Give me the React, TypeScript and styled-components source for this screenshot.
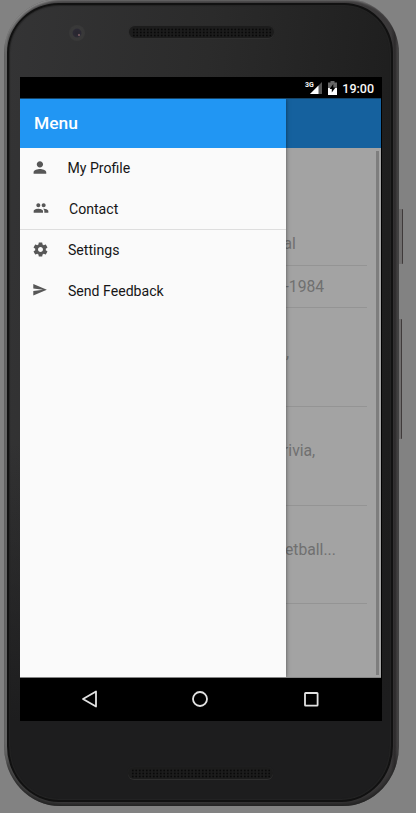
import React from 'react';
import styled, { createGlobalStyle } from 'styled-components';

const GlobalStyle = createGlobalStyle`
  * { box-sizing: border-box; }
  html, body { margin: 0; background: #828282; overflow: hidden; }
  body { font-family: Roboto, 'Noto Sans', sans-serif; }
  svg { display: block; flex: none; }
`;

const Stage = styled.div`
  position: relative;
  width: 416px;
  height: 813px;
  overflow: hidden;
  background: #828282;
`;

const SideButton = styled.div<{ $top: number; $height: number; $width: number }>`
  position: absolute;
  left: 398px;
  top: ${(p) => p.$top}px;
  width: ${(p) => p.$width}px;
  height: ${(p) => p.$height}px;
  background: #706e6e;
  border-right: 1px solid #3f3a3a;
  border-radius: 0 1px 1px 0;
`;

const Rim = styled.div`
  position: relative;
  width: 395px;
  height: 807px;
  margin: -1px 0 0 4px;
  padding: 4px 6px 4px 3px;
  border-radius: 56px 53px 56px 56px / 54px 54px 60px 60px;
  background: linear-gradient(90deg, #5f5f5f 0, #707070 2px, #555 4px, #454445 30px, #3b393a 387px, #2d2b2c 391px, #434142 393px, #505050 395px);
  box-shadow: inset 0 -4px 4px -1px #222, inset 2px 3px 3px -2px #999;
`;

const Body = styled.div`
  display: flex;
  flex-direction: column;
  align-items: center;
  width: 386px;
  height: 799px;
  border: 2px solid #111;
  border-radius: 52px 49px 52px 52px / 50px 50px 56px 56px;
  background: linear-gradient(180deg, rgba(28,28,29,0) 0%, rgba(28,28,29,0) 55%, #1d1d1e 90%),
    linear-gradient(95deg, #343435 0%, #2b2b2b 45%, #1c1c1c 95%);
  box-shadow: inset 0 0 1px 1px #242424;
`;

const TopBezel = styled.div`
  display: flex;
  flex: none;
  width: 100%;
  height: 72px;
  padding: 21px 0 0 60px;
`;

const Camera = styled.div`
  width: 16px;
  height: 16px;
  margin: -1px 44px 0 0;
  border-radius: 50%;
  background: radial-gradient(circle at 10px 10px, #a0777a 0, transparent 1.6px),
    radial-gradient(circle, #28252e 0, #2b2933 3.8px, #393939 5px, #383838 8px);
`;

const Speaker = styled.div`
  width: 145px;
  height: 12px;
  padding: 1.5px 3px;
  border-radius: 6px;
  background: #1c1c1c;
  box-shadow: 0 0 1px #292929, 0 1px 0 #303030;
`;

const Holes = styled.div`
  height: 9px;
  background-image: radial-gradient(circle, #090909 0.6px, transparent 1.3px);
  background-size: 3.5px 3px;
`;

const Screen = styled.div`
  display: flex;
  flex: none;
  flex-direction: column;
  width: 362px;
  height: 644px;
  margin-left: 2px;
  background: #000;
`;

const StatusBar = styled.div`
  display: flex;
  flex: none;
  align-items: flex-start;
  width: 362px;
  height: 21px;
  padding: 4px 7px 0 285px;
  color: #f7f7f7;
`;

const Clock = styled.span`
  margin: -1px 0 0 5.5px;
  font-size: 12.5px;
  line-height: 17px;
  font-weight: 500;
`;

const AppArea = styled.div`
  display: flex;
  flex: none;
  width: 361px;
  height: 580px;
  border-top: 1px solid #164467;
  border-bottom: 1px solid #858585;
  overflow: hidden;
  background: #a3a3a3;
`;

const Drawer = styled.nav`
  position: relative;
  flex: none;
  width: 266px;
  background: #fafafa;
  box-shadow: 0 0 4px rgba(0, 0, 0, 0.5);
`;

const DrawerTitle = styled.h1`
  height: 49px;
  margin: 0;
  padding-left: 14px;
  background: #2196f3;
  color: #fff;
  font-size: 17.4px;
  font-weight: 500;
  line-height: 49px;
`;

const MenuGroup = styled.ul`
  margin: 0;
  padding: 0;
  list-style: none;
  & + & { border-top: 1px solid #dedede; }
`;

const MenuItem = styled.li<{ $gap: number }>`
  display: flex;
  align-items: center;
  gap: ${(p) => p.$gap}px;
  height: 40.5px;
  padding: 0 0 0 12px;
  color: #161616;
  font-size: 14.1px;
  svg { margin-top: -2px; fill: #575757; }
`;

const Content = styled.main`
  flex: 1;
  min-width: 0;
`;

const Toolbar = styled.div`
  height: 49px;
  background: #15619e;
`;

const Scroller = styled.div`
  display: flex;
  justify-content: space-between;
  height: 529px;
  padding: 3px 2px 2px 0;
  overflow: hidden;
`;

const Fields = styled.div`
  width: 81px;
`;

const Field = styled.div<{ $height: number; $line: number; $shift: number }>`
  height: ${(p) => p.$height}px;
  padding-top: ${(p) => p.$line}px;
  border-bottom: 1px solid #949494;
  color: #707070;
  font-size: 15.7px;
  line-height: 20px;
  white-space: nowrap;
  text-indent: ${(p) => p.$shift}px;
`;

const Scrollbar = styled.div`
  width: 3px;
  height: 524px;
  background: #7e7e7e;
`;

const NavBar = styled.div`
  display: flex;
  align-items: center;
  justify-content: space-between;
  height: 43px;
  padding: 0 62.5px 2px 60px;
  svg { fill: none; stroke: #e2e2e2; stroke-width: 1.8; }
`;

const BottomBezel = styled.div`
  padding: 46px 0 0 1px;
`;

const icons = {
  person: 'M12 12c2.21 0 4-1.79 4-4s-1.79-4-4-4-4 1.79-4 4 1.79 4 4 4zm0 2c-2.67 0-8 1.34-8 4v2h16v-2c0-2.66-5.33-4-8-4z',
  people: 'M16 11c1.66 0 2.99-1.34 2.99-3S17.66 5 16 5s-3 1.34-3 3 1.34 3 3 3zm-8 0c1.66 0 2.99-1.34 2.99-3S9.66 5 8 5 5 6.34 5 8s1.34 3 3 3zm0 2c-2.33 0-7 1.17-7 3.5V19h14v-2.5c0-2.33-4.67-3.5-7-3.5zm8 0c-.29 0-.62.02-.97.05 1.16.84 1.97 1.97 1.97 3.45V19h6v-2.5c0-2.33-4.67-3.5-7-3.5z',
  gear: 'M19.43 12.98c.04-.32.07-.64.07-.98s-.03-.66-.07-.98l2.11-1.65c.19-.15.24-.42.12-.64l-2-3.46c-.12-.22-.39-.3-.61-.22l-2.49 1c-.52-.4-1.08-.73-1.69-.98l-.38-2.65C14.46 2.18 14.25 2 14 2h-4c-.25 0-.46.18-.49.42l-.38 2.65c-.61.25-1.17.59-1.69.98l-2.49-1c-.23-.09-.49 0-.61.22l-2 3.46c-.13.22-.07.49.12.64l2.11 1.65c-.04.32-.07.65-.07.98s.03.66.07.98l-2.11 1.65c-.19.15-.24.42-.12.64l2 3.46c.12.22.39.3.61.22l2.49-1c.52.4 1.08.73 1.69.98l.38 2.65c.03.24.24.42.49.42h4c.25 0 .46-.18.49-.42l.38-2.65c.61-.25 1.17-.59 1.69-.98l2.49 1c.23.09.49 0 .61-.22l2-3.46c.12-.22.07-.49-.12-.64l-2.11-1.65zM12 15.5c-1.93 0-3.5-1.57-3.5-3.5s1.57-3.5 3.5-3.5 3.5 1.57 3.5 3.5-1.57 3.5-3.5 3.5z',
  send: 'M2.01 21L23 12 2.01 3 2 10l15 2-15 2z',
};

type MenuEntry = { label: string; path: string; box: string; size: number; gap: number };

const groups: MenuEntry[][] = [
  [
    { label: 'My Profile', path: icons.person, box: '2 0 24 24', size: 19, gap: 16.5 },
    { label: 'Contact', path: icons.people, box: '-1.5 0 24 24', size: 16, gap: 21 },
  ],
  [
    { label: 'Settings', path: icons.gear, box: '0 0 24 24', size: 17, gap: 19 },
    { label: 'Send Feedback', path: icons.send, box: '0 0 24 24', size: 15.5, gap: 20.5 },
  ],
];

const fields = [
  { text: 'al', height: 115, line: 83, shift: -2.5 },
  { text: '-1984', height: 42, line: 10.5, shift: -1.5 },
  { text: ',', height: 99, line: 35, shift: 0 },
  { text: 'rivia,', height: 98.5, line: 34, shift: -3 },
  { text: 'etball...', height: 98.5, line: 34, shift: -1 },
];

const NetworkLabel = styled.span`
  font-size: 7px;
  line-height: 8px;
  font-weight: 700;
`;

const SignalIcon = styled.svg`
  margin: 1px 0 0 -5px;
`;

const BatteryIcon = styled.svg`
  margin: 0 0 0 6px;
`;

export default function App() {
  return (
    <>
      <GlobalStyle />
      <Stage>
        <SideButton $top={209} $height={55} $width={5} />
        <SideButton $top={319} $height={120} $width={4} />
        <Rim>
          <Body>
            <TopBezel>
              <Camera />
              <Speaker><Holes /></Speaker>
            </TopBezel>
            <Screen>
              <StatusBar>
                <NetworkLabel>3G</NetworkLabel>
                <SignalIcon width="13" height="12" viewBox="0 0 13 12">
                  <path d="M13 0V12H1Z" fill="#555" />
                  <path d="M9.5 3.5V12H1Z" fill="#fff" />
                </SignalIcon>
                <BatteryIcon width="9" height="14" viewBox="0 0 9 14">
                  <path d="M2.5 0h4v1.5H9V7H0V1.5h2.5z" fill="#666" />
                  <path d="M0 7h9v7H0z" fill="#fff" />
                  <path d="M5.3 3 1.6 8h2.2v3.5L7.5 6.5H5.3z" fill="#000" />
                </BatteryIcon>
                <Clock>19:00</Clock>
              </StatusBar>
              <AppArea>
                <Drawer>
                  <DrawerTitle>Menu</DrawerTitle>
                  {groups.map((group, index) => (
                    <MenuGroup key={index}>
                      {group.map((item) => (
                        <MenuItem key={item.label} $gap={item.gap}>
                          <svg width={item.size} height={item.size} viewBox={item.box} overflow="visible">
                            <path d={item.path} />
                          </svg>
                          {item.label}
                        </MenuItem>
                      ))}
                    </MenuGroup>
                  ))}
                </Drawer>
                <Content>
                  <Toolbar />
                  <Scroller>
                    <Fields>
                      {fields.map((f) => (
                        <Field key={f.text} $height={f.height} $line={f.line} $shift={f.shift}>
                          {f.text}
                        </Field>
                      ))}
                    </Fields>
                    <Scrollbar />
                  </Scroller>
                </Content>
              </AppArea>
              <NavBar>
                <svg width="18" height="18" viewBox="0 0 18 18">
                  <path d="M3 9 16 1.5v15z" strokeLinejoin="round" />
                </svg>
                <svg width="18" height="18" viewBox="0 0 18 18">
                  <circle cx="9" cy="9" r="7" />
                </svg>
                <svg width="18" height="18" viewBox="0 0 18 18">
                  <rect x="3" y="3" width="12.6" height="12.6" rx=".6" />
                </svg>
              </NavBar>
            </Screen>
            <BottomBezel>
              <Speaker><Holes /></Speaker>
            </BottomBezel>
          </Body>
        </Rim>
      </Stage>
    </>
  );
}
